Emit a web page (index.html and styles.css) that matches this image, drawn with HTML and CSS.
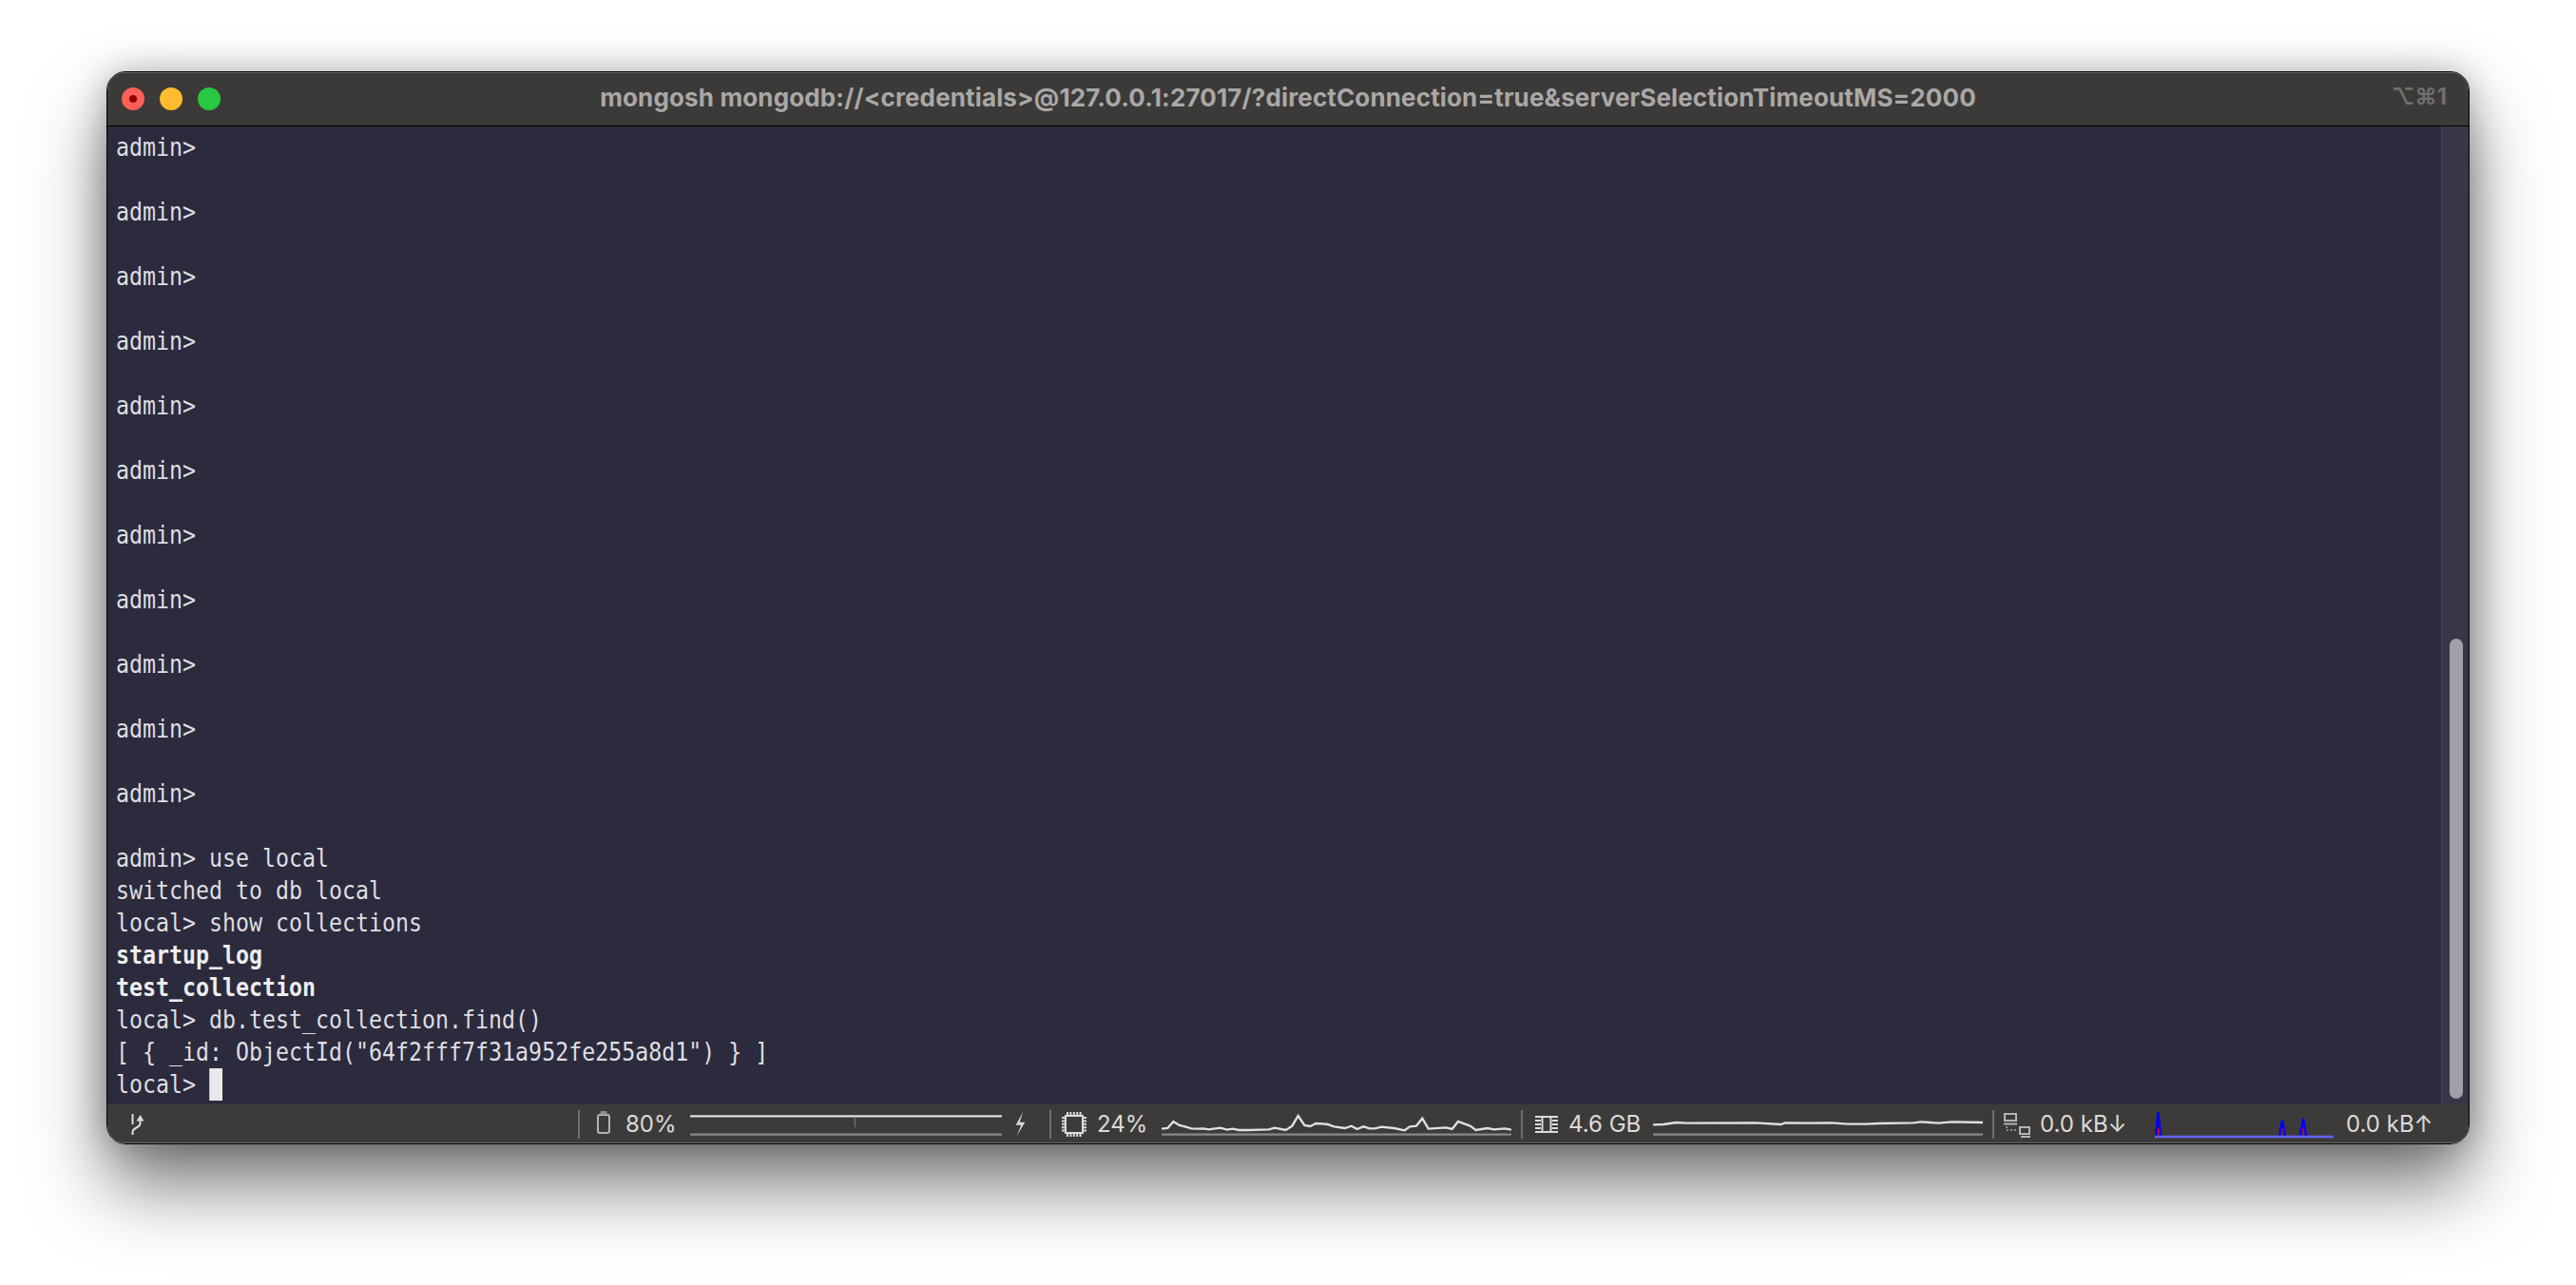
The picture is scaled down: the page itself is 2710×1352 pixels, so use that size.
FILE: index.html
```html
<!DOCTYPE html>
<html lang="en">
<head>
<meta charset="utf-8">
<title>mongosh</title>
<link rel="stylesheet" href="styles.css">
</head>
<body>
<main class="window">
  <header class="titlebar">
    <div class="lights">
      <span class="light red"><i class="dot"></i></span>
      <span class="light yellow"></span>
      <span class="light green"></span>
    </div>
    <div class="title">mongosh mongodb://&lt;credentials&gt;@127.0.0.1:27017/?directConnection=true&amp;serverSelectionTimeoutMS=2000</div>
    <div class="shortcut">⌥⌘1</div>
  </header>
  <section class="terminal">
    <div class="output">
      <div class="row">admin&gt;</div><div class="row"></div>
      <div class="row">admin&gt;</div><div class="row"></div>
      <div class="row">admin&gt;</div><div class="row"></div>
      <div class="row">admin&gt;</div><div class="row"></div>
      <div class="row">admin&gt;</div><div class="row"></div>
      <div class="row">admin&gt;</div><div class="row"></div>
      <div class="row">admin&gt;</div><div class="row"></div>
      <div class="row">admin&gt;</div><div class="row"></div>
      <div class="row">admin&gt;</div><div class="row"></div>
      <div class="row">admin&gt;</div><div class="row"></div>
      <div class="row">admin&gt;</div><div class="row"></div>
      <div class="row">admin&gt; use local</div>
      <div class="row">switched to db local</div>
      <div class="row">local&gt; show collections</div>
      <div class="row bold">startup_log</div>
      <div class="row bold">test_collection</div>
      <div class="row">local&gt; db.test_collection.find()</div>
      <div class="row">[ { _id: ObjectId("64f2fff7f31a952fe255a8d1") } ]</div>
      <div class="row">local&gt; <span class="cursor"></span></div>
    </div>
    <div class="scrollbar"><div class="thumb"></div></div>
  </section>
  <footer class="status">
    <div class="seg seg-git">
      <svg class="ic-git" viewBox="0 0 14 24" width="14" height="24">
        <path d="M1.5 1v11" fill="none" stroke="#dcdbd9" stroke-width="2"/>
        <path d="M9.500 8v3c0 5-8 4-8 9v3" fill="none" stroke="#dcdbd9" stroke-width="2"/>
        <path d="M9.500 2l4 6.500h-8z" fill="#dcdbd9"/>
      </svg>
    </div>
    <div class="seg seg-battery">
      <svg class="ic-battery" viewBox="0 0 14 25" width="14" height="25">
        <rect x="1" y="5" width="12" height="19" rx="2" fill="none" stroke="#b5b4b2" stroke-width="2"/>
        <rect x="3.500" y="1" width="7" height="3.500" rx="1" fill="#8f8e8c"/>
      </svg>
      <span class="val val-battery">80%</span>
      <svg class="graph" viewBox="378 60 984 80" width="328" height="26.670">
        <path d="M378 73H1362" class="line"/>
        <path d="M898 73V108" class="thin"/>
        <path d="M378 131H1362" class="base"/>
      </svg>
      <svg class="ic-bolt" viewBox="1400 55 36 80" width="12" height="26.670">
        <path d="M1428 57L1405 99H1422L1408 133L1434 90H1417z" fill="#dcdbd9"/>
      </svg>
    </div>
    <div class="seg seg-cpu">
      <svg class="ic-cpu" viewBox="0 0 26 26" width="26" height="26">
        <rect x="4" y="4" width="18" height="18" fill="none" stroke="#dcdbd9" stroke-width="2"/>
        <path d="M5 1.500H22M5 24.500H22M1.500 5V22M24.500 5V22" fill="none" stroke="#dcdbd9" stroke-width="3" stroke-dasharray="2 1.400"/>
      </svg>
      <span class="val val-cpu">24%</span>
      <svg class="graph" viewBox="366 60 1104 80" width="368" height="26.670">
        <path d="M366 113L385 111L403 90L422 102L440 106L460 112L480 113L497 112L515 115L535 112L552 110L572 116L590 113L610 117L640 117L680 116L705 115L722 110L758 117L778 104L797 72L817 102L835 105L853 96L875 97L890 99L910 106L945 111L965 104L983 114L1003 106L1023 112L1040 112L1060 107L1100 111L1133 118L1150 106L1170 104L1189 80L1208 113L1265 109L1283 114L1302 90L1340 104L1358 117L1395 111L1415 115L1450 112L1470 116" class="line"/>
        <path d="M366 131H1470" class="base"/>
      </svg>
    </div>
    <div class="seg seg-mem">
      <svg class="ic-mem" viewBox="0 0 24 18" width="24" height="18">
        <path d="M0 1H24M0 5H6M18 5H24M0 9H6M18 9H24M0 13H6M18 13H24M0 17H24" fill="none" stroke="#dcdbd9" stroke-width="2"/>
        <path d="M7.500 1V17M16.500 1V17" fill="none" stroke="#dcdbd9" stroke-width="2"/>
      </svg>
      <span class="val val-mem">4.6 GB</span>
      <svg class="graph" viewBox="417 60 1041 80" width="347" height="26.670">
        <path d="M417 100L450 99L490 93L520 95L740 94L820 99L835 94L900 95L980 94L1030 98L1090 98L1130 96L1240 94L1262 91L1320 95L1360 91L1458 93" class="line"/>
        <path d="M417 131H1458" class="base"/>
      </svg>
    </div>
    <div class="seg seg-net">
      <svg class="ic-net" viewBox="0 0 28 26" width="28" height="26">
        <rect x="1" y="1" width="12" height="7" fill="none" stroke="#b5b4b2" stroke-width="2"/>
        <path d="M0 11.500H14M18 25H28" fill="none" stroke="#b5b4b2" stroke-width="2"/>
        <rect x="17" y="15" width="10" height="7" fill="none" stroke="#b5b4b2" stroke-width="2"/>
        <path d="M3 14v4h11" fill="none" stroke="#8f8e8c" stroke-width="2" stroke-dasharray="2 2"/>
      </svg>
      <span class="val val-down">0.0 kB↓</span>
      <svg class="graph-net" viewBox="2268 1164 188 32" width="188" height="32">
        <path d="M2269 1192L2271 1184L2273 1192M2398 1192L2402 1184L2405 1192M2421 1192L2424 1184L2427 1192" fill="none" stroke="#ff0000" stroke-width="2"/>
        <path d="M2269 1192L2271.500 1167L2274 1192M2399 1192L2402 1176L2405 1192M2421 1192L2424 1174L2427 1192" fill="none" stroke="#0000ff" stroke-width="2.500"/>
        <path d="M2268 1193H2456" fill="none" stroke="#6464ff" stroke-width="2.500"/>
      </svg>
      <span class="val val-up">0.0 kB↑</span>
    </div>
  </footer>
</main>
</body>
</html>
```
FILE: styles.css
```css
* { box-sizing: border-box; }
html, body { margin: 0; height: 1352px; overflow: hidden; background: #fff; }
body { padding: 75px 112px 0; }

.window {
  width: 2486px;
  height: 1129px;
  display: flex;
  flex-direction: column;
  border: 1px solid #000;
  border-radius: 20px;
  overflow: hidden;
  box-shadow: 0 44px 78px rgba(0, 0, 0, .52), 0 0 36px rgba(0, 0, 0, .26);
}

.titlebar {
  position: relative;
  height: 57px;
  flex: none;
  display: flex;
  align-items: center;
  justify-content: center;
  background: #3c3a38;
  border-bottom: 1px solid #000;
  box-shadow: inset 0 1px 0 #6a6967;
}
.lights { position: absolute; left: 15px; top: 16px; display: flex; gap: 16px; }
.light { width: 24px; height: 24px; border-radius: 50%; display: flex; align-items: center; justify-content: center; }
.red { background: #ff5f57; }
.yellow { background: #febc2e; }
.green { background: #28c840; }
.dot { width: 8px; height: 8px; border-radius: 50%; background: #8e0000; }
.title {
  font: 700 26px/1 "Inter", "Liberation Sans", sans-serif;
  letter-spacing: .14px;
  color: #aaa8a6;
  white-space: nowrap;
  margin-top: -2px;
}
.shortcut {
  position: absolute;
  right: 23px;
  top: 12px;
  font: 700 24px/1.2 "Inter", "DejaVu Sans", sans-serif;
  color: #706f6d;
}

.terminal { flex: 1; min-height: 0; display: flex; background: #2c2b3d; }
.output { flex: 1; padding: 5px 0 0 9px; }
.row {
  height: 34px;
  font: 400 27px/34px "DejaVu Sans Mono", monospace;
  color: #dedee2;
  white-space: pre;
  transform: scaleX(.8615);
  transform-origin: 0 0;
}
.bold { font-weight: 700; color: #eeeef0; }
.cursor { display: inline-block; width: 16.25px; height: 34px; background: #e9e9eb; vertical-align: top; }
.scrollbar { width: 29px; flex: none; padding: 539px 6px 6px 8px; background: #383748; border-left: 1px solid #44435a; }
.thumb { height: 100%; border-radius: 8px; background: #a09fab; }

.status {
  height: 41px;
  flex: none;
  display: grid;
  grid-template-columns: 495px 496px 496px 496px 1fr;
  align-items: center;
  background: #3c3b39;
  box-shadow: inset 0 -1px 0 #6a6967;
}
.seg { height: 41px; display: flex; align-items: center; position: relative; }
.seg + .seg::before {
  content: "";
  position: absolute;
  left: 0;
  top: 6px;
  width: 2px;
  height: 30px;
  background: #6f6e6c;
}
.seg-git { padding-left: 25px; }
.val { font: 400 24px/1 "Inter", "Liberation Sans", sans-serif; color: #dcdbd9; white-space: nowrap; }
.seg svg { flex: none; display: block; }
.graph { margin: 2px 0 0 1px; }
.line { fill: none; stroke: #e2e1df; stroke-width: 7; }
.thin { fill: none; stroke: #a5a4a2; stroke-width: 2; }
.base { fill: none; stroke: #8a8987; stroke-width: 7; }

.ic-battery { margin: -4px 0 0 20px; }
.val-battery { width: 67px; margin-left: 16px; }
.ic-bolt { margin: 0 0 0 13px; }
.ic-cpu { margin: 1px 0 0 13px; }
.val-cpu { width: 67px; margin-left: 11px; }
.ic-mem { margin: 1px 0 0 15px; }
.val-mem { width: 88px; margin-left: 11px; }
.ic-net { margin: 3px 0 0 12px; }
.val-down { width: 121px; margin-left: 10px; }
.graph-net { margin-top: 1px; }
.val-up { margin-left: 13px; }
```
